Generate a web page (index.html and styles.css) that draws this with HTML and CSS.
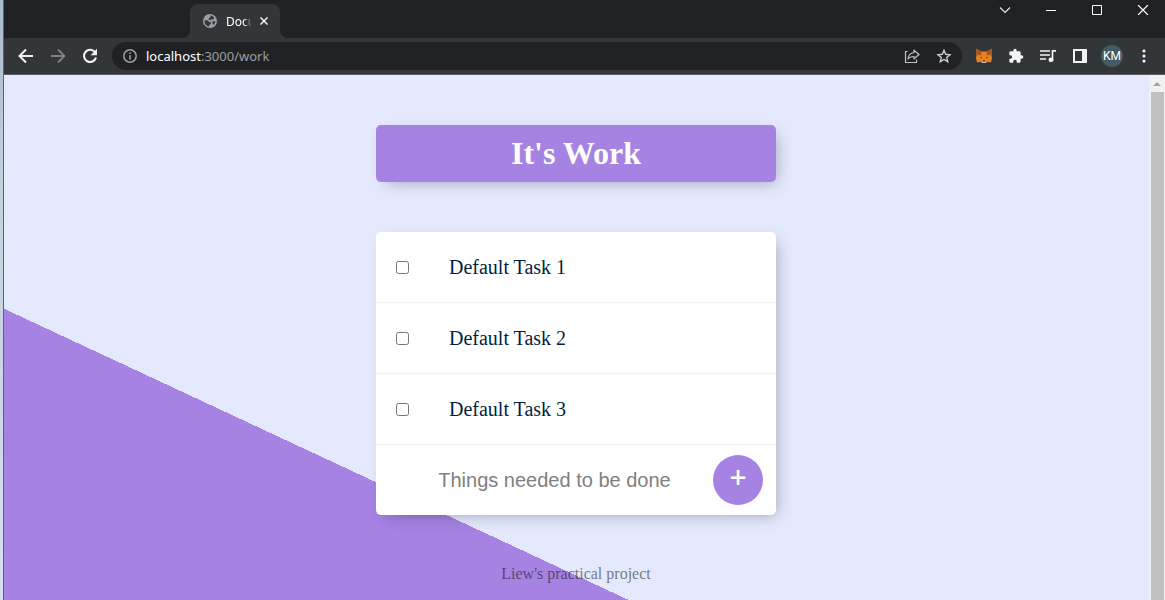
FILE: index.html
```html
<!DOCTYPE html>
<html lang="en">
<head>
<meta charset="utf-8">
<title>Document</title>
<link rel="stylesheet" href="styles.css">
</head>
<body>
<div class="desktop-edge"></div>
<div class="window">
  <div class="tab-strip">
    <div class="tab">
      <svg class="globe" width="14" height="14" viewBox="0 0 14 14"><circle cx="7" cy="7" r="7" fill="#9aa0a6"/><path d="M2 6.200l3 .3 1 1.500 2 .3v1.500l-1.500 1-.3 1.700c-2.700-.3-4.700-2.700-4.700-5.500zM7.500 1.600c1.600.2 3 1 3.900 2.300L10 5.500 8 5.200 7.400 6.600 5.500 5.600 6 4l1.500-.6zM9.300 7.500l3-.5c0 1.700-.8 3-1.900 4L9.500 9.500z" fill="#323639"/></svg>
      <span class="tab-title">Docu</span>
      <button class="tab-close" aria-label="Close tab"><svg width="10" height="10" viewBox="0 0 10 10"><path d="M1.500 1.500l7 7M8.500 1.500l-7 7" stroke="#f1f3f4" stroke-width="1.500"/></svg></button>
    </div>
    <div class="window-controls">
      <button aria-label="Search tabs"><svg width="12" height="10" viewBox="0 0 12 10"><path d="M1 2.500l5 5 5-5" fill="none" stroke="#e4e5e7" stroke-width="1.200"/></svg></button>
      <button aria-label="Minimize"><svg width="12" height="10" viewBox="0 0 12 10"><path d="M1 9.500h10" stroke="#fff" transform="translate(0 -4)"/></svg></button>
      <button aria-label="Maximize"><svg width="12" height="10" viewBox="0 0 12 10"><path d="M1.500.5h9v9h-9z" fill="none" stroke="#fff"/></svg></button>
      <button aria-label="Close"><svg width="12" height="10" viewBox="0 0 12 10"><path d="M1 0l10 10M11 0L1 10" stroke="#fff" stroke-width="1.200"/></svg></button>
    </div>
  </div>
  <div class="toolbar">
    <div class="nav">
      <button aria-label="Back"><svg width="16" height="16" viewBox="0 0 16 16"><path d="M15 8H2M8 1.500L1.500 8 8 14.500" fill="none" stroke="#f1f3f4" stroke-width="2"/></svg></button>
      <button aria-label="Forward"><svg width="16" height="16" viewBox="0 0 16 16"><path d="M1 8h13M8 1.500L14.500 8 8 14.500" fill="none" stroke="#7f8387" stroke-width="1.800"/></svg></button>
      <button aria-label="Reload"><svg width="16" height="16" viewBox="0 0 16 16"><path d="M13.200 4.500A6.100 6.100 0 1 0 14 9.500" fill="none" stroke="#f1f3f4" stroke-width="2.100"/><path d="M15 .8v6.400H8.600z" fill="#f1f3f4"/></svg></button>
    </div>
    <div class="address">
      <svg width="14" height="14" viewBox="0 0 14 14"><circle cx="7" cy="7" r="6.200" fill="none" stroke="#9aa0a6" stroke-width="1.500"/><path d="M7 6.200V10.500M7 3.500V5" stroke="#9aa0a6" stroke-width="1.600"/></svg>
      <span class="url"><b>localhost</b>:3000/work</span>
      <button aria-label="Share"><svg width="16" height="16" viewBox="0 0 16 16"><path d="M3.500 3.500H1.500v11h11v-3" fill="none" stroke="#bdc1c6" stroke-width="1.200"/><path d="M10 2.200l5 4.300-5 4.300V8.500C7 8.500 5.200 9.300 4 11c.3-3.500 2.300-6 6-6.500z" fill="none" stroke="#bdc1c6" stroke-width="1.200" stroke-linejoin="round"/></svg></button>
      <button aria-label="Bookmark"><svg width="16" height="16" viewBox="0 0 16 16"><path d="M8 2.300l1.700 4 4.300.4-3.300 2.800 1 4.200L8 11.500l-3.700 2.200 1-4.200L2 6.700l4.300-.4z" fill="none" stroke="#c8cbcf" stroke-width="1.400"/></svg></button>
    </div>
    <div class="extensions">
      <button aria-label="Wallet"><svg width="16" height="16" viewBox="0 0 16 16"><path d="M0 .8l6 2.700h4l6-2.700-.6 6 .6 3.700-1.200 4-3.600-.8L9.800 15H6.200l-1.400-1.300-3.600.8L0 10.500l.6-3.700z" fill="#e8821e"/><path d="M0 .8l6 2.700-1.500 4L.8 6.500zM16 .8l-6 2.700 1.500 4 3.700-1z" fill="#a9531d"/><path d="M4 9l2 .6-.5.9zM12 9l-2 .6.500.9z" fill="#3c2b22"/><path d="M5.200 13h5.600L9.800 15H6.200z" fill="#d5bfb2"/><path d="M6.700 12.500h2.600l.3 1.100H6.400z" fill="#28211f"/></svg></button>
      <button aria-label="Extensions"><svg width="16" height="16" viewBox="0 0 24 24"><path d="M20.500 11H19V7c0-1.100-.9-2-2-2h-4V3.500a2.500 2.500 0 0 0-5 0V5H4c-1.100 0-2 .9-2 2v3.800h1.500a2.700 2.700 0 0 1 0 5.400H2V20c0 1.100.9 2 2 2h3.800v-1.500a2.700 2.700 0 0 1 5.400 0V22H17c1.100 0 2-.9 2-2v-4h1.500a2.500 2.500 0 0 0 0-5z" fill="#f1f3f4"/></svg></button>
      <button aria-label="Media"><svg width="16" height="16" viewBox="0 0 16 16"><path d="M0 3h10M0 7h10M0 11h6M12.500 13V2.800H16" fill="none" stroke="#f1f3f4" stroke-width="1.700"/><circle cx="10.900" cy="11.800" r="2.400" fill="#f1f3f4"/></svg></button>
      <button aria-label="Side panel"><svg width="16" height="16" viewBox="0 0 16 16"><path d="M1 1h14v14H1zM3 3v10h7V3z" fill="#f1f3f4" fill-rule="evenodd"/></svg></button>
      <button class="avatar" aria-label="Profile">KM</button>
      <button aria-label="Menu"><svg width="16" height="16" viewBox="0 0 16 16"><circle cx="8" cy="3" r="1.600" fill="#f1f3f4"/><circle cx="8" cy="8" r="1.600" fill="#f1f3f4"/><circle cx="8" cy="13" r="1.600" fill="#f1f3f4"/></svg></button>
    </div>
  </div>
  <div class="viewport">
    <main class="page">
      <h1 class="heading">It's Work</h1>
      <form class="tasks">
        <div class="item"><input type="checkbox" id="t1"><label for="t1">Default Task 1</label></div>
        <div class="item"><input type="checkbox" id="t2"><label for="t2">Default Task 2</label></div>
        <div class="item"><input type="checkbox" id="t3"><label for="t3">Default Task 3</label></div>
        <div class="new-item">
          <input type="text" placeholder="Things needed to be done" aria-label="New task">
          <button type="button" aria-label="Add task">+</button>
        </div>
      </form>
      <footer>Liew's practical project</footer>
    </main>
    <div class="scrollbar"><span class="arrow"></span><span class="thumb"></span></div>
  </div>
</div>
</body>
</html>
```
FILE: styles.css
```css
* { box-sizing: border-box; }
body {
  margin: 0;
  height: 100vh;
  display: flex;
  overflow: hidden;
  font-family: "Liberation Serif", "Times New Roman", serif;
}
button { border: 0; padding: 0; background: none; color: inherit; }
svg { display: block; flex: none; }

.desktop-edge {
  flex: none;
  width: 4px;
  background: linear-gradient(#a9b9d2, #c4cfdc 30%, #d4e0ee);
  border-right: 1px solid #5d636b;
}
.window { flex: 1; min-width: 0; display: flex; flex-direction: column; }

.tab-strip {
  height: 38px;
  flex: none;
  display: flex;
  justify-content: space-between;
  padding: 4px 0 0 186px;
  background: #202124;
  font-family: "Noto Sans", "Open Sans", sans-serif;
}
.tab {
  position: relative;
  display: flex;
  align-items: center;
  width: 90px;
  padding: 0 11px 0 13px;
  border-radius: 8px 8px 0 0;
  background: #323639;
}
.tab::before, .tab::after {
  content: "";
  position: absolute;
  bottom: 0;
  width: 8px;
  height: 8px;
}
.tab::before { left: -8px; background: radial-gradient(circle at 0 0, transparent 8px, #323639 8px); }
.tab::after { right: -8px; background: radial-gradient(circle at 100% 0, transparent 8px, #323639 8px); }
.tab-title {
  margin-left: 9px;
  font-size: 12px;
  color: #fff;
  -webkit-mask-image: linear-gradient(90deg, #000 60%, transparent 90%);
  mask-image: linear-gradient(90deg, #000 60%, transparent 90%);
}
.tab-close { margin-left: auto; }
.window-controls { display: flex; align-items: flex-start; gap: 34px; padding: 1px 16px 0 0; }

.toolbar {
  height: 37px;
  flex: none;
  display: flex;
  align-items: center;
  padding: 0 13px 0 14px;
  background: #323639;
  border-bottom: 1px solid #5b5f64;
  font-family: "Noto Sans", "Open Sans", sans-serif;
}
.nav { display: flex; gap: 16px; }
.address {
  flex: 1;
  display: flex;
  align-items: center;
  height: 28px;
  margin-left: 14px;
  padding: 0 10px 0 11px;
  border-radius: 14px;
  background: #202124;
}
.url { flex: 1; margin-left: 9px; font-size: 13px; line-height: 20px; color: #9aa0a6; }
.url b { font-weight: 400; color: #fff; }
.address button + button { margin-left: 16px; }
.extensions { display: flex; align-items: center; gap: 16px; margin-left: 14px; }
.avatar {
  width: 22px;
  height: 22px;
  margin: 0 -3px;
  border-radius: 50%;
  background: #455a64;
  color: #fff;
  font: 12px/22px Roboto, sans-serif;
}

.viewport { flex: 1; display: flex; min-height: 0; }
.page {
  flex: 1;
  padding: 50px 1px 0 0;
  background: linear-gradient(25deg, #a683e3 264px, #e4e9fd 264px);
}
.heading, .tasks {
  width: 400px;
  max-width: 100%;
  margin: 0 auto 50px;
  border-radius: 5px;
  box-shadow: 5px 5px 15px -5px rgba(0, 0, 0, 0.3);
}
.heading {
  padding: 10px;
  background: #a683e3;
  color: #fff;
  font-size: 32px;
  line-height: 37px;
  text-align: center;
}
.tasks { background: #fff; }
.item {
  display: flex;
  align-items: center;
  min-height: 71px;
  padding: 0 20px;
  border-bottom: 1px solid #f1f1f1;
}
.item input { width: 13px; height: 13px; margin: 0 40px 0 0; }
.item label { font-size: 20px; line-height: 24px; color: #001f3f; }
.new-item { display: flex; align-items: center; min-height: 70px; padding: 0 13px 0 20px; }
.new-item input {
  flex: 1;
  min-width: 0;
  height: 60px;
  padding: 0;
  border: 0;
  outline: 0;
  background: transparent;
  font: 20px "Liberation Sans", Arial, sans-serif;
  text-align: center;
}
.new-item input::placeholder { color: #808080; }
.new-item button {
  width: 50px;
  height: 50px;
  padding-bottom: 6px;
  border-radius: 50%;
  background: #a683e3;
  color: #fff;
  font: 500 30px/44px "Noto Sans", "Open Sans", sans-serif;
}
footer { font-size: 16px; line-height: 18px; text-align: center; color: rgba(0, 0, 0, 0.5); }

.scrollbar {
  width: 16px;
  flex: none;
  display: flex;
  flex-direction: column;
  align-items: center;
  background: #f1f1f1;
}
.arrow {
  margin: 7px 0 6px;
  border: solid transparent;
  border-width: 0 4px 4px;
  border-bottom-color: #a3a3a3;
}
.thumb { flex: 1; width: 13px; background: #c1c1c1; }
```
